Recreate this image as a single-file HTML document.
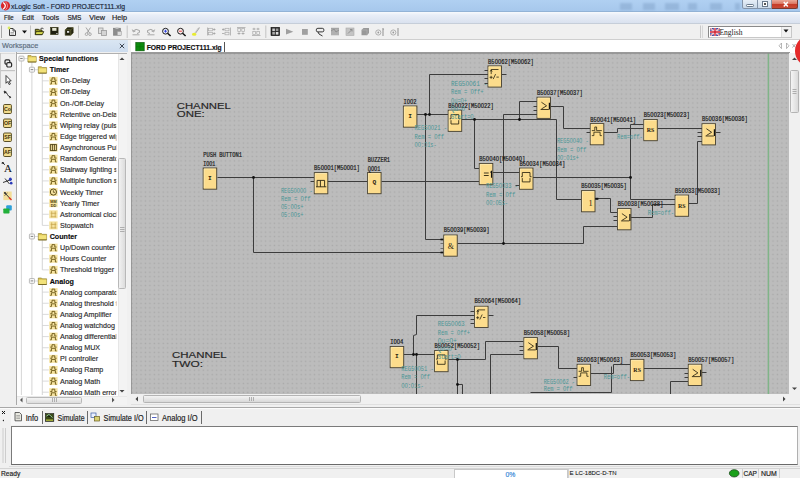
<!DOCTYPE html><html><head><meta charset="utf-8"><style>
*{margin:0;padding:0;box-sizing:border-box}
html,body{width:800px;height:478px;overflow:hidden;background:#f0f0f0;font-family:"Liberation Sans",sans-serif;font-size:8px;color:#000}
.a{position:absolute}
.sx{transform-origin:0 0;white-space:nowrap}
</style></head><body><div class="a" style="left:0px;top:0px;width:800px;height:12px;background:linear-gradient(#b0d0f2,#a6c7ec);"></div><div class="a" style="left:0px;top:11px;width:800px;height:1px;background:#93b3d6;"></div><svg class="a" style="left:0;top:0" width="12" height="12" viewBox="0 0 12 12"><circle cx="5.5" cy="5.8" r="4.6" fill="#d8262a"/><path d="M3.2 2.6 Q7.5 5.8 3.2 9.2" stroke="#fff" stroke-width="1.3" fill="none"/><path d="M5.5 1.8 Q9.6 5.8 5.5 9.9" stroke="#ffd0d0" stroke-width="0.6" fill="none"/></svg><div class="a" style="left:620px;top:3px;width:12px;height:7px;background:#7e9fc6;opacity:0.45;filter:blur(1.2px);"></div><div class="a" style="left:643px;top:3px;width:12px;height:7px;background:#7e9fc6;opacity:0.45;filter:blur(1.2px);"></div><div class="a" style="left:665px;top:3px;width:14px;height:7px;background:#7e9fc6;opacity:0.45;filter:blur(1.2px);"></div><div class="a" style="left:688px;top:3px;width:9px;height:7px;background:#7e9fc6;opacity:0.45;filter:blur(1.2px);"></div><div class="a" style="left:710px;top:3px;width:12px;height:7px;background:#7e9fc6;opacity:0.45;filter:blur(1.2px);"></div><div class="a" style="left:735px;top:3px;width:5px;height:7px;background:#7e9fc6;opacity:0.45;filter:blur(1.2px);"></div><div class="a" style="left:741.6px;top:0px;width:16px;height:9.3px;background:linear-gradient(#e6eef7,#c9d8e8);border:1px solid #8393a8;border-top:none;border-radius:0 0 0 2.5px;"></div><div class="a" style="left:746px;top:4.4px;width:8px;height:2.4px;background:#fff;border:0.8px solid #6a7a8c;border-radius:1.2px;"></div><div class="a" style="left:757.6px;top:0px;width:14.5px;height:9.3px;background:linear-gradient(#e6eef7,#c9d8e8);border-bottom:1px solid #8393a8;border-right:1px solid #8393a8;"></div><div class="a" style="left:762px;top:1.4px;width:6px;height:5.6px;border:1.2px solid #6a7a8c;background:#fff;"></div><div class="a" style="left:763.8px;top:3.2px;width:2.4px;height:2px;background:#555;"></div><div class="a" style="left:772px;top:0px;width:26.4px;height:9.3px;background:linear-gradient(#eaa898 0%,#dc7a66 45%,#c63c28 55%,#c84a36);border:1px solid #7a3a30;border-top:none;border-left:none;border-radius:0 0 2.5px 0;"></div><svg class="a" style="left:781px;top:0px" width="10" height="9"><path d="M2.8 2 L6.8 6.6 M6.8 2 L2.8 6.6" stroke="#fff" stroke-width="1.5"/></svg><div class="a" style="left:0px;top:12px;width:800px;height:12px;background:linear-gradient(#f8fafd 0,#e9eef7 25%,#d8e0ee);"></div><div class="a" style="left:0px;top:23px;width:800px;height:1px;background:#c6ced9;"></div><div class="a" style="left:0px;top:24px;width:800px;height:16px;background:#f0f0f0;"></div><div class="a" style="left:0px;top:39px;width:800px;height:1px;background:#cfcfcf;"></div><svg class="a" style="left:0;top:0" width="800" height="40"><line x1="1.5" y1="25.5" x2="1.5" y2="38" stroke="#a8a8a8" stroke-width="1"/><path d="M9.5 28.5 H13 L15.5 31 V35.5 H9.5 Z" fill="#f4f4f4" stroke="#3a3a3a" stroke-width="1"/><path d="M13 28.5 V31 H15.5" fill="none" stroke="#3a3a3a" stroke-width="0.8"/><path d="M10.5 32.5 H14 M10.5 34 H14" stroke="#777" stroke-width="0.6"/><circle cx="9" cy="28" r="1.4" fill="#d8e860"/><path d="M22 30.6 H27 L24.5 33.4 Z" fill="#111"/><line x1="30.5" y1="25.5" x2="30.5" y2="38" stroke="#c4c4c4" stroke-width="1"/><path d="M35.3 29.3 H38.5 L39.2 30 H42 V34.6 H35.3 Z" fill="#9c9c24" stroke="#26260a" stroke-width="0.9"/><path d="M36 31.6 H43.8 L42.3 34.6 H35.3 Z" fill="#d6d850" stroke="#26260a" stroke-width="0.8"/><path d="M40.5 28.8 Q42 27.3 43.5 28.7" stroke="#222" stroke-width="0.8" fill="none"/><rect x="50.6" y="27.3" width="7.5" height="7.3" fill="#202010" stroke="#3c3c1a" stroke-width="0.6"/><rect x="52.2" y="28" width="4.3" height="2.8" fill="#e6e6d0"/><rect x="56.3" y="33" width="1.2" height="1.1" fill="#ddd"/><path d="M65.2 29.8 L67.5 27.6 H73.2 V33 L70.8 35.3 H65.2 Z" fill="#22220e" stroke="#3a3a1a" stroke-width="0.6"/><path d="M65.2 29.8 H70.8 V35.3 M70.8 29.8 L73.2 27.6" stroke="#7a7a40" stroke-width="0.6" fill="none"/><rect x="67" y="31" width="2.2" height="1.8" fill="#ddd"/><line x1="78.5" y1="25.5" x2="78.5" y2="38" stroke="#c4c4c4" stroke-width="1"/><path d="M86 27.5 L89.5 33 M90.5 27.5 L87 33" stroke="#9a9a9a" stroke-width="0.9" fill="none"/><circle cx="86.5" cy="34.2" r="1.3" fill="none" stroke="#9a9a9a" stroke-width="0.8"/><circle cx="90" cy="34.2" r="1.3" fill="none" stroke="#9a9a9a" stroke-width="0.8"/><rect x="98.5" y="28" width="4.5" height="5.5" fill="#e0e0e0" stroke="#9a9a9a" stroke-width="0.8"/><rect x="101.5" y="30.5" width="5" height="5" fill="#d4d4d4" stroke="#9a9a9a" stroke-width="0.8"/><rect x="113.5" y="28.2" width="7" height="7" fill="#8c8c8c" stroke="#777" stroke-width="0.6"/><rect x="115.5" y="27.5" width="3" height="1.5" fill="#bbb"/><rect x="117.3" y="31.5" width="4.2" height="4" fill="#dcdcdc" stroke="#999" stroke-width="0.5"/><line x1="127.2" y1="25.5" x2="127.2" y2="38" stroke="#c4c4c4" stroke-width="1"/><path d="M133 31 Q136 28 139.5 30.5 Q140.5 33 137 33.5" stroke="#9a9a9a" stroke-width="0.9" fill="none"/><path d="M132.3 29.5 L133.3 32 L135.5 31" stroke="#9a9a9a" stroke-width="0.8" fill="none"/><rect x="132.5" y="34.3" width="7" height="1" fill="#aaa"/><path d="M154 31 Q151 28 147.5 30.5 Q146.5 33 150 33.5" stroke="#9a9a9a" stroke-width="0.9" fill="none"/><path d="M154.7 29.5 L153.7 32 L151.5 31" stroke="#9a9a9a" stroke-width="0.8" fill="none"/><rect x="147.5" y="34.3" width="7" height="1" fill="#aaa"/><circle cx="165.5" cy="31.2" r="2.9" fill="#eef2ff" stroke="#1a1a1a" stroke-width="1"/><path d="M167.6 33.3 L170.6 36" stroke="#111" stroke-width="1.5"/><path d="M164.1 31.2 H166.9 M165.5 29.8 V32.6" stroke="#2a3ad8" stroke-width="0.9"/><circle cx="180.5" cy="31.2" r="2.9" fill="#fff0f0" stroke="#1a1a1a" stroke-width="1"/><path d="M182.6 33.3 L185.6 36" stroke="#111" stroke-width="1.5"/><path d="M179.1 31.2 H181.9" stroke="#d83a3a" stroke-width="1"/><path d="M199.5 27.5 L195.5 33" stroke="#a8a8a8" stroke-width="1.2"/><path d="M198 28 L194.5 33.5" stroke="#cfcfcf" stroke-width="0.8"/><ellipse cx="194.2" cy="34.2" rx="2.3" ry="1.5" fill="#e8ec30"/><path d="M207.5 27.5 V35.5" stroke="#aaa" stroke-width="0.8"/><rect x="208.5" y="28.3" width="4" height="2.5" fill="none" stroke="#aaa" stroke-width="0.7"/><rect x="208.5" y="32.3" width="4" height="2.5" fill="none" stroke="#aaa" stroke-width="0.7"/><path d="M213 29.5 H215.5 M214.2 28.3 V30.7 M213 33.5 H215.5 M214.2 32.3 V34.7" stroke="#999" stroke-width="0.7"/><path d="M230.5 27.5 V35.5" stroke="#aaa" stroke-width="0.8"/><rect x="225" y="28.3" width="4" height="2.5" fill="none" stroke="#aaa" stroke-width="0.7"/><rect x="225" y="32.3" width="4" height="2.5" fill="none" stroke="#aaa" stroke-width="0.7"/><path d="M222 29.5 H224.5 M223.2 28.3 V30.7 M222 33.5 H224.5" stroke="#999" stroke-width="0.7"/><path d="M237 27.5 H245.5" stroke="#aaa" stroke-width="0.8"/><rect x="237.8" y="28.5" width="2.8" height="3" fill="none" stroke="#aaa" stroke-width="0.7"/><rect x="241.8" y="28.5" width="2.8" height="3" fill="none" stroke="#aaa" stroke-width="0.7"/><path d="M237.5 33.5 H240.5 M239 32.3 V34.7 M241.5 33.5 H244.5 M243 32.3 V34.7" stroke="#999" stroke-width="0.7"/><path d="M252 35.5 H260.5" stroke="#aaa" stroke-width="0.8"/><rect x="252.8" y="31.5" width="2.8" height="3" fill="none" stroke="#aaa" stroke-width="0.7"/><rect x="256.8" y="31.5" width="2.8" height="3" fill="none" stroke="#aaa" stroke-width="0.7"/><path d="M252.5 29 H255.5 M254 27.8 V30.2 M256.5 29 H259.5 M258 27.8 V30.2" stroke="#999" stroke-width="0.7"/><line x1="265.8" y1="25.5" x2="265.8" y2="38" stroke="#c4c4c4" stroke-width="1"/><rect x="271" y="27.3" width="8.6" height="8.4" fill="#2a2a2a" stroke="#111" stroke-width="0.6"/><rect x="272.3" y="28.5" width="2.6" height="2.6" fill="#ccc"/><rect x="275.8" y="28.5" width="2.6" height="2.6" fill="#999"/><rect x="272.3" y="32" width="2.6" height="2.6" fill="#aaa"/><rect x="275.8" y="32" width="2.6" height="2.6" fill="#ddd"/><path d="M286 28.8 L293.3 31.7 L286 34.6 Z" fill="#a0a0a0"/><rect x="302" y="29" width="5.8" height="5.8" fill="#a0a0a0"/><rect x="316.3" y="28.3" width="7.6" height="3.6" rx="1.6" fill="#eee" stroke="#222" stroke-width="0.9"/><path d="M318 32 L319 34 L322.5 36" stroke="#222" stroke-width="0.9" fill="none"/><rect x="331" y="28.5" width="8" height="6.8" fill="#b0b0b0"/><path d="M331 31 L334 29 L336 32 L339 30" stroke="#888" stroke-width="0.8" fill="none"/><rect x="331" y="27.8" width="8" height="1" fill="#999"/><rect x="346" y="28" width="8" height="7.5" fill="#c4c4c4" stroke="#aaa" stroke-width="0.6"/><path d="M348 33.5 L352 29.5 M350 29.5 H352 V31.5" stroke="#8a8a8a" stroke-width="0.9" fill="none"/><path d="M361.5 30 L363.5 28 H369 V33 L367 35.3 H361.5 Z" fill="#999"/><path d="M361.5 30 H367 V35.3" stroke="#bbb" stroke-width="0.5" fill="none"/><circle cx="378.3" cy="32.5" r="2.6" fill="none" stroke="#a8a8a8" stroke-width="0.9"/><circle cx="378.3" cy="32.5" r="0.9" fill="#999"/><path d="M383.0 28 V36" stroke="#a0a0a0" stroke-width="1.2"/><circle cx="393.3" cy="32.5" r="2.6" fill="none" stroke="#a8a8a8" stroke-width="0.9"/><circle cx="393.3" cy="32.5" r="0.9" fill="#999"/><path d="M398.0 28 V36" stroke="#a0a0a0" stroke-width="1.2"/><path d="M383 28.5 L382.8 29.8 L384.2 29.8 Z" fill="#999"/><line x1="700.5" y1="25.5" x2="700.5" y2="38" stroke="#c8c8c8" stroke-width="1"/><line x1="702.5" y1="25.5" x2="702.5" y2="38" stroke="#d8d8d8" stroke-width="1"/></svg><div class="a" style="left:708px;top:25.5px;width:84px;height:12px;background:#fff;border:1px solid #8a8a8a;border-right-color:#c8c8c8;border-bottom-color:#c8c8c8;"></div><div class="a" style="left:781px;top:26.5px;width:10px;height:10px;background:#f2f2f2;border-left:1px solid #ddd;"></div><svg class="a" style="left:783px;top:29px" width="6" height="4"><path d="M0.5 0.5 H5.5 L3 3.5 Z" fill="#111"/></svg><svg class="a" style="left:710px;top:27.5px" width="10" height="8" viewBox="0 0 10 8"><rect width="10" height="8" fill="#2c3e9c"/><path d="M0 0 L10 8 M10 0 L0 8" stroke="#fff" stroke-width="1.6"/><path d="M0 0 L10 8 M10 0 L0 8" stroke="#d02030" stroke-width="0.6"/><path d="M5 0 V8 M0 4 H10" stroke="#fff" stroke-width="2.4"/><path d="M5 0 V8 M0 4 H10" stroke="#d02030" stroke-width="1.4"/></svg><div class="a" style="left:0px;top:40px;width:128px;height:12px;background:linear-gradient(#dae6f3,#cddcee);"></div><svg class="a" style="left:118px;top:42px" width="8" height="8"><path d="M1.8 1.8 L6.2 6.2 M6.2 1.8 L1.8 6.2" stroke="#2a3340" stroke-width="0.9"/></svg><div class="a" style="left:0px;top:52px;width:16px;height:355px;background:#f0f0f0;"></div><div class="a" style="left:15.5px;top:52px;width:1px;height:353px;background:#a9a9a9;"></div><div class="a" style="left:1px;top:52.5px;width:14px;height:1px;background:#dcdcdc;"></div><div class="a" style="left:16.5px;top:52.5px;width:110.5px;height:352.5px;background:#fff;border:1px solid #b0b0b0;border-left:none;"></div><div class="a" style="left:117.5px;top:53.5px;width:9px;height:342px;background:#f3f3f3;border-left:1px solid #e6e6e6;"></div><div class="a" style="left:118.3px;top:157.8px;width:7.4px;height:131.5px;background:linear-gradient(90deg,#f2f2f2,#dcdcdc);border:1px solid #b8b8b8;border-radius:1.5px;"></div><svg class="a" style="left:117px;top:53px" width="10" height="343"><path d="M2.5 7 L5 4.5 L7.5 7 Z" fill="#444"/><path d="M2.5 337 L5 339.5 L7.5 337 Z" fill="#444"/><path d="M3 174.5 H7.5 M3 176.5 H7.5 M3 178.5 H7.5" stroke="#888" stroke-width="0.6"/></svg><div class="a" style="left:17px;top:395.5px;width:110px;height:9px;background:#f3f3f3;border-top:1px solid #e8e8e8;"></div><div class="a" style="left:26px;top:396.5px;width:56px;height:7px;background:linear-gradient(#f4f4f4,#dcdcdc);border:1px solid #b8b8b8;border-radius:1.5px;"></div><svg class="a" style="left:17px;top:395px" width="110" height="10"><path d="M5.5 2.5 L3 5 L5.5 7.5 Z" fill="#555"/><path d="M95 2.5 L97.5 5 L95 7.5 Z" fill="#555"/><path d="M35.5 3 V7 M37.5 3 V7 M39.5 3 V7" stroke="#888" stroke-width="0.6"/></svg><svg class="a" style="left:0;top:0" width="130" height="400"><path d="M21.4 61.2 V395" stroke="#d0d0d0" stroke-width="0.9"/><path d="M31.9 62.2 V395" stroke="#d0d0d0" stroke-width="0.9"/><path d="M24 58.6 H27.9" stroke="#d0d0d0" stroke-width="0.8"/><path d="M34.6 69.72 H38.3" stroke="#d0d0d0" stroke-width="0.8"/><path d="M34.6 236.51999999999998 H38.3" stroke="#d0d0d0" stroke-width="0.8"/><path d="M34.6 281.0 H38.3" stroke="#d0d0d0" stroke-width="0.8"/><path d="M42.3 73.52 V225.39999999999998" stroke="#d0d0d0" stroke-width="0.9"/><path d="M42.3 80.84 H48.8" stroke="#d0d0d0" stroke-width="0.8"/><path d="M42.3 91.96000000000001 H48.8" stroke="#d0d0d0" stroke-width="0.8"/><path d="M42.3 103.08 H48.8" stroke="#d0d0d0" stroke-width="0.8"/><path d="M42.3 114.19999999999999 H48.8" stroke="#d0d0d0" stroke-width="0.8"/><path d="M42.3 125.32 H48.8" stroke="#d0d0d0" stroke-width="0.8"/><path d="M42.3 136.44 H48.8" stroke="#d0d0d0" stroke-width="0.8"/><path d="M42.3 147.56 H48.8" stroke="#d0d0d0" stroke-width="0.8"/><path d="M42.3 158.68 H48.8" stroke="#d0d0d0" stroke-width="0.8"/><path d="M42.3 169.79999999999998 H48.8" stroke="#d0d0d0" stroke-width="0.8"/><path d="M42.3 180.92 H48.8" stroke="#d0d0d0" stroke-width="0.8"/><path d="M42.3 192.04 H48.8" stroke="#d0d0d0" stroke-width="0.8"/><path d="M42.3 203.16 H48.8" stroke="#d0d0d0" stroke-width="0.8"/><path d="M42.3 214.27999999999997 H48.8" stroke="#d0d0d0" stroke-width="0.8"/><path d="M42.3 225.39999999999998 H48.8" stroke="#d0d0d0" stroke-width="0.8"/><path d="M42.3 240.32 V269.88" stroke="#d0d0d0" stroke-width="0.9"/><path d="M42.3 247.64 H48.8" stroke="#d0d0d0" stroke-width="0.8"/><path d="M42.3 258.76 H48.8" stroke="#d0d0d0" stroke-width="0.8"/><path d="M42.3 269.88 H48.8" stroke="#d0d0d0" stroke-width="0.8"/><path d="M42.3 284.8 V395" stroke="#d0d0d0" stroke-width="0.9"/><path d="M42.3 292.12 H48.8" stroke="#d0d0d0" stroke-width="0.8"/><path d="M42.3 303.24 H48.8" stroke="#d0d0d0" stroke-width="0.8"/><path d="M42.3 314.36 H48.8" stroke="#d0d0d0" stroke-width="0.8"/><path d="M42.3 325.48 H48.8" stroke="#d0d0d0" stroke-width="0.8"/><path d="M42.3 336.6 H48.8" stroke="#d0d0d0" stroke-width="0.8"/><path d="M42.3 347.72 H48.8" stroke="#d0d0d0" stroke-width="0.8"/><path d="M42.3 358.84 H48.8" stroke="#d0d0d0" stroke-width="0.8"/><path d="M42.3 369.96 H48.8" stroke="#d0d0d0" stroke-width="0.8"/><path d="M42.3 381.08 H48.8" stroke="#d0d0d0" stroke-width="0.8"/><path d="M42.3 392.2 H48.8" stroke="#d0d0d0" stroke-width="0.8"/><rect x="18.9" y="56.1" width="5.1" height="4.9" rx="0.8" fill="#f6f6f6" stroke="#a0a0a0" stroke-width="0.7"/><path d="M20.2 58.5 H22.7" stroke="#555" stroke-width="0.7"/><path d="M27.9 55.6 H31.099999999999998 L31.9 56.4 H36.2 V62.0 H27.9 Z" fill="#d8c050" stroke="#8a7a28" stroke-width="0.6"/><rect x="28.4" y="57.300000000000004" width="7.5" height="4.3" fill="#f2e27a"/><rect x="27.9" y="61.6" width="8.3" height="0.8" fill="#6a5a18"/><rect x="29.4" y="67.22" width="5.1" height="4.9" rx="0.8" fill="#f6f6f6" stroke="#a0a0a0" stroke-width="0.7"/><path d="M30.7 69.62 H33.199999999999996" stroke="#555" stroke-width="0.7"/><path d="M38.3 66.72 H41.5 L42.3 67.52 H46.599999999999994 V73.12 H38.3 Z" fill="#d8c050" stroke="#8a7a28" stroke-width="0.6"/><rect x="38.8" y="68.42" width="7.5" height="4.3" fill="#f2e27a"/><rect x="38.3" y="72.72" width="8.3" height="0.8" fill="#6a5a18"/><rect x="49.2" y="76.84" width="8.4" height="8" fill="#f6e3a0"/><path d="M50.2 80.24000000000001 H52.0 V77.84 H54.800000000000004 V80.24000000000001 H56.6" stroke="#6a5614" stroke-width="0.9" fill="none"/><path d="M50.2 84.04 H51.400000000000006 V81.44 H55.400000000000006 V84.04 H56.6" stroke="#6a5614" stroke-width="0.9" fill="none"/><rect x="49.2" y="87.96000000000001" width="8.4" height="8" fill="#f6e3a0"/><path d="M50.2 91.36000000000001 H52.0 V88.96000000000001 H54.800000000000004 V91.36000000000001 H56.6" stroke="#6a5614" stroke-width="0.9" fill="none"/><path d="M50.2 95.16000000000001 H51.400000000000006 V92.56 H55.400000000000006 V95.16000000000001 H56.6" stroke="#6a5614" stroke-width="0.9" fill="none"/><rect x="49.2" y="99.08" width="8.4" height="8" fill="#f6e3a0"/><path d="M50.2 102.48 H52.0 V100.08 H54.800000000000004 V102.48 H56.6" stroke="#6a5614" stroke-width="0.9" fill="none"/><path d="M50.2 106.28 H51.400000000000006 V103.67999999999999 H55.400000000000006 V106.28 H56.6" stroke="#6a5614" stroke-width="0.9" fill="none"/><rect x="49.2" y="110.19999999999999" width="8.4" height="8" fill="#f6e3a0"/><path d="M50.2 113.6 H52.0 V111.19999999999999 H54.800000000000004 V113.6 H56.6" stroke="#6a5614" stroke-width="0.9" fill="none"/><path d="M50.2 117.39999999999999 H51.400000000000006 V114.79999999999998 H55.400000000000006 V117.39999999999999 H56.6" stroke="#6a5614" stroke-width="0.9" fill="none"/><rect x="49.2" y="121.32" width="8.4" height="8" fill="#f6e3a0"/><path d="M50.2 124.72 H52.0 V122.32 H54.800000000000004 V124.72 H56.6" stroke="#6a5614" stroke-width="0.9" fill="none"/><path d="M50.2 128.51999999999998 H51.400000000000006 V125.91999999999999 H55.400000000000006 V128.51999999999998 H56.6" stroke="#6a5614" stroke-width="0.9" fill="none"/><rect x="49.2" y="132.44" width="8.4" height="8" fill="#f6e3a0"/><path d="M50.2 135.84 H52.0 V133.44 H54.800000000000004 V135.84 H56.6" stroke="#6a5614" stroke-width="0.9" fill="none"/><path d="M50.2 139.64 H51.400000000000006 V137.04 H55.400000000000006 V139.64 H56.6" stroke="#6a5614" stroke-width="0.9" fill="none"/><rect x="49.2" y="143.56" width="8.4" height="8" fill="#f6e3a0"/><path d="M50.400000000000006 144.56 V150.56 M52.400000000000006 144.56 V150.56 M54.400000000000006 144.56 V150.56 M56.400000000000006 144.56 V150.56 M50.2 144.56 H56.6 M50.2 150.56 H56.6" stroke="#3a2e08" stroke-width="0.8" fill="none"/><rect x="49.2" y="154.68" width="8.4" height="8" fill="#f6e3a0"/><path d="M50.2 158.08 H52.0 V155.68 H54.800000000000004 V158.08 H56.6" stroke="#6a5614" stroke-width="0.9" fill="none"/><path d="M50.2 161.88 H51.400000000000006 V159.28 H55.400000000000006 V161.88 H56.6" stroke="#6a5614" stroke-width="0.9" fill="none"/><rect x="49.2" y="165.79999999999998" width="8.4" height="8" fill="#f6e3a0"/><path d="M50.2 169.2 H52.0 V166.79999999999998 H54.800000000000004 V169.2 H56.6" stroke="#6a5614" stroke-width="0.9" fill="none"/><path d="M50.2 172.99999999999997 H51.400000000000006 V170.39999999999998 H55.400000000000006 V172.99999999999997 H56.6" stroke="#6a5614" stroke-width="0.9" fill="none"/><rect x="49.2" y="176.92" width="8.4" height="8" fill="#f6e3a0"/><path d="M50.2 180.32 H52.0 V177.92 H54.800000000000004 V180.32 H56.6" stroke="#6a5614" stroke-width="0.9" fill="none"/><path d="M50.2 184.11999999999998 H51.400000000000006 V181.51999999999998 H55.400000000000006 V184.11999999999998 H56.6" stroke="#6a5614" stroke-width="0.9" fill="none"/><rect x="49.2" y="188.04" width="8.4" height="8" fill="#f6e3a0"/><circle cx="53.400000000000006" cy="192.04" r="3.1" fill="none" stroke="#4a3a08" stroke-width="0.9"/><path d="M53.400000000000006 190.23999999999998 V192.34 H55.0" stroke="#4a3a08" stroke-width="0.7" fill="none"/><rect x="49.2" y="199.16" width="8.4" height="8" fill="#f6e3a0"/><text x="53.400000000000006" y="202.85999999999999" font-family="Liberation Sans" font-size="3.8" font-weight="bold" text-anchor="middle" fill="#4a3a08">MM</text><text x="53.400000000000006" y="206.76" font-family="Liberation Sans" font-size="3.8" font-weight="bold" text-anchor="middle" fill="#4a3a08">DD</text><rect x="49.2" y="210.27999999999997" width="8.4" height="8" fill="#f6e3a0"/><path d="M50.7 213.27999999999997 H56.2 M50.7 216.77999999999997 H56.2 M51.7 211.27999999999997 V217.27999999999997 M55.2 211.27999999999997 V217.27999999999997" stroke="#c8a850" stroke-width="0.8" fill="none"/><rect x="49.2" y="221.39999999999998" width="8.4" height="8" fill="#f6e3a0"/><path d="M50.7 224.39999999999998 H56.2 M50.7 227.89999999999998 H56.2 M51.7 222.39999999999998 V228.39999999999998 M55.2 222.39999999999998 V228.39999999999998" stroke="#c8a850" stroke-width="0.8" fill="none"/><rect x="29.4" y="234.01999999999998" width="5.1" height="4.9" rx="0.8" fill="#f6f6f6" stroke="#a0a0a0" stroke-width="0.7"/><path d="M30.7 236.42 H33.199999999999996" stroke="#555" stroke-width="0.7"/><path d="M38.3 233.51999999999998 H41.5 L42.3 234.32 H46.599999999999994 V239.92 H38.3 Z" fill="#d8c050" stroke="#8a7a28" stroke-width="0.6"/><rect x="38.8" y="235.21999999999997" width="7.5" height="4.3" fill="#f2e27a"/><rect x="38.3" y="239.51999999999998" width="8.3" height="0.8" fill="#6a5a18"/><rect x="49.2" y="243.64" width="8.4" height="8" fill="#f6e3a0"/><path d="M50.2 247.04 H52.0 V244.64 H54.800000000000004 V247.04 H56.6" stroke="#6a5614" stroke-width="0.9" fill="none"/><path d="M50.2 250.83999999999997 H51.400000000000006 V248.23999999999998 H55.400000000000006 V250.83999999999997 H56.6" stroke="#6a5614" stroke-width="0.9" fill="none"/><rect x="49.2" y="254.76" width="8.4" height="8" fill="#f6e3a0"/><path d="M50.2 258.15999999999997 H52.0 V255.76 H54.800000000000004 V258.15999999999997 H56.6" stroke="#6a5614" stroke-width="0.9" fill="none"/><path d="M50.2 261.96 H51.400000000000006 V259.36 H55.400000000000006 V261.96 H56.6" stroke="#6a5614" stroke-width="0.9" fill="none"/><rect x="49.2" y="265.88" width="8.4" height="8" fill="#f6e3a0"/><path d="M50.2 269.28 H52.0 V266.88 H54.800000000000004 V269.28 H56.6" stroke="#6a5614" stroke-width="0.9" fill="none"/><path d="M50.2 273.08 H51.400000000000006 V270.48 H55.400000000000006 V273.08 H56.6" stroke="#6a5614" stroke-width="0.9" fill="none"/><rect x="29.4" y="278.5" width="5.1" height="4.9" rx="0.8" fill="#f6f6f6" stroke="#a0a0a0" stroke-width="0.7"/><path d="M30.7 280.9 H33.199999999999996" stroke="#555" stroke-width="0.7"/><path d="M38.3 278.0 H41.5 L42.3 278.8 H46.599999999999994 V284.4 H38.3 Z" fill="#d8c050" stroke="#8a7a28" stroke-width="0.6"/><rect x="38.8" y="279.7" width="7.5" height="4.3" fill="#f2e27a"/><rect x="38.3" y="284.0" width="8.3" height="0.8" fill="#6a5a18"/><rect x="49.2" y="288.12" width="8.4" height="8" fill="#f6e3a0"/><path d="M50.2 291.52 H52.0 V289.12 H54.800000000000004 V291.52 H56.6" stroke="#6a5614" stroke-width="0.9" fill="none"/><path d="M50.2 295.32 H51.400000000000006 V292.72 H55.400000000000006 V295.32 H56.6" stroke="#6a5614" stroke-width="0.9" fill="none"/><rect x="49.2" y="299.24" width="8.4" height="8" fill="#f6e3a0"/><path d="M50.2 302.64 H52.0 V300.24 H54.800000000000004 V302.64 H56.6" stroke="#6a5614" stroke-width="0.9" fill="none"/><path d="M50.2 306.44 H51.400000000000006 V303.84000000000003 H55.400000000000006 V306.44 H56.6" stroke="#6a5614" stroke-width="0.9" fill="none"/><rect x="49.2" y="310.36" width="8.4" height="8" fill="#f6e3a0"/><path d="M50.2 313.76 H52.0 V311.36 H54.800000000000004 V313.76 H56.6" stroke="#6a5614" stroke-width="0.9" fill="none"/><path d="M50.2 317.56 H51.400000000000006 V314.96000000000004 H55.400000000000006 V317.56 H56.6" stroke="#6a5614" stroke-width="0.9" fill="none"/><rect x="49.2" y="321.48" width="8.4" height="8" fill="#f6e3a0"/><path d="M50.2 324.88 H52.0 V322.48 H54.800000000000004 V324.88 H56.6" stroke="#6a5614" stroke-width="0.9" fill="none"/><path d="M50.2 328.68 H51.400000000000006 V326.08000000000004 H55.400000000000006 V328.68 H56.6" stroke="#6a5614" stroke-width="0.9" fill="none"/><rect x="49.2" y="332.6" width="8.4" height="8" fill="#f6e3a0"/><path d="M50.2 336.0 H52.0 V333.6 H54.800000000000004 V336.0 H56.6" stroke="#6a5614" stroke-width="0.9" fill="none"/><path d="M50.2 339.8 H51.400000000000006 V337.20000000000005 H55.400000000000006 V339.8 H56.6" stroke="#6a5614" stroke-width="0.9" fill="none"/><rect x="49.2" y="343.72" width="8.4" height="8" fill="#f6e3a0"/><path d="M50.2 347.12 H52.0 V344.72 H54.800000000000004 V347.12 H56.6" stroke="#6a5614" stroke-width="0.9" fill="none"/><path d="M50.2 350.92 H51.400000000000006 V348.32000000000005 H55.400000000000006 V350.92 H56.6" stroke="#6a5614" stroke-width="0.9" fill="none"/><rect x="49.2" y="354.84" width="8.4" height="8" fill="#f6e3a0"/><path d="M50.2 358.23999999999995 H52.0 V355.84 H54.800000000000004 V358.23999999999995 H56.6" stroke="#6a5614" stroke-width="0.9" fill="none"/><path d="M50.2 362.03999999999996 H51.400000000000006 V359.44 H55.400000000000006 V362.03999999999996 H56.6" stroke="#6a5614" stroke-width="0.9" fill="none"/><rect x="49.2" y="365.96" width="8.4" height="8" fill="#f6e3a0"/><path d="M50.2 369.35999999999996 H52.0 V366.96 H54.800000000000004 V369.35999999999996 H56.6" stroke="#6a5614" stroke-width="0.9" fill="none"/><path d="M50.2 373.15999999999997 H51.400000000000006 V370.56 H55.400000000000006 V373.15999999999997 H56.6" stroke="#6a5614" stroke-width="0.9" fill="none"/><rect x="49.2" y="377.08" width="8.4" height="8" fill="#f6e3a0"/><path d="M50.2 380.47999999999996 H52.0 V378.08 H54.800000000000004 V380.47999999999996 H56.6" stroke="#6a5614" stroke-width="0.9" fill="none"/><path d="M50.2 384.28 H51.400000000000006 V381.68 H55.400000000000006 V384.28 H56.6" stroke="#6a5614" stroke-width="0.9" fill="none"/><rect x="49.2" y="388.2" width="8.4" height="8" fill="#f6e3a0"/><path d="M50.2 391.59999999999997 H52.0 V389.2 H54.800000000000004 V391.59999999999997 H56.6" stroke="#6a5614" stroke-width="0.9" fill="none"/><path d="M50.2 395.4 H51.400000000000006 V392.8 H55.400000000000006 V395.4 H56.6" stroke="#6a5614" stroke-width="0.9" fill="none"/></svg><svg class="a" style="left:0;top:0" width="16" height="230"><rect x="0" y="53" width="1" height="35" fill="#c8c8c8"/><rect x="1" y="70" width="14" height="1.2" fill="#c4c4c4"/><rect x="5" y="59.8" width="4.8" height="4.4" rx="1.2" fill="none" stroke="#2a2a2a" stroke-width="1.2"/><rect x="6.8" y="62.6" width="4.8" height="4.4" rx="1.2" fill="#f0f0f0" stroke="#2a2a2a" stroke-width="1.2"/><path d="M6 75.5 V83.3 L7.6 81.6 L9.2 84.6 L10.4 84 L8.9 81.1 L11.2 80.9 Z" fill="#fff" stroke="#222" stroke-width="0.85"/><path d="M4.2 91 L6.3 92.2 L4.6 93.2 Z M4.5 92 Q7 92.5 7.5 94.5 Q8.2 96.5 10.6 97" stroke="#222" stroke-width="0.9" fill="none"/><path d="M11.3 97.3 L9.2 96 L9.6 98.4 Z" fill="#222"/><rect x="3.6" y="104.5" width="7.8" height="9.0" rx="1" fill="#f2dc8e" stroke="#4a3e14" stroke-width="0.9"/><text x="7.5" y="111.0" font-family="Liberation Sans" font-size="5.2" font-weight="bold" text-anchor="middle" fill="#3a2e08">Co</text><rect x="3.6" y="119" width="7.8" height="8.5" rx="1" fill="#f2dc8e" stroke="#4a3e14" stroke-width="0.9"/><text x="7.5" y="125.25" font-family="Liberation Sans" font-size="5.2" font-weight="bold" text-anchor="middle" fill="#3a2e08">OF</text><rect x="3.6" y="133" width="7.8" height="8.5" rx="1" fill="#f2dc8e" stroke="#4a3e14" stroke-width="0.9"/><text x="7.5" y="139.25" font-family="Liberation Sans" font-size="5.2" font-weight="bold" text-anchor="middle" fill="#3a2e08">SF</text><rect x="3.6" y="147.5" width="7.8" height="9.0" rx="1" fill="#f2dc8e" stroke="#4a3e14" stroke-width="0.9"/><text x="7.5" y="154.0" font-family="Liberation Sans" font-size="5.2" font-weight="bold" text-anchor="middle" fill="#3a2e08">AF</text><text x="8" y="171.8" font-family="Liberation Serif" font-size="11" text-anchor="middle" fill="#111">A</text><path d="M2.3 162.6 L4.8 164.6" stroke="#111" stroke-width="1"/><path d="M2.2 162.5 H3.8 M2.2 162.5 V164" stroke="#111" stroke-width="0.8"/><path d="M3 182.5 L11.5 179.5 M5 178.5 L9.5 184" stroke="#222" stroke-width="0.9"/><ellipse cx="10.3" cy="179.3" rx="1.5" ry="1.8" fill="#2a3ab8"/><ellipse cx="11.2" cy="183.2" rx="1.3" ry="1.4" fill="#2a3ab8"/><rect x="3.3" y="191.5" width="8.4" height="8.6" fill="#f4de98"/><path d="M4.5 192.5 L10.5 199" stroke="#333" stroke-width="1"/><path d="M4.5 195.5 L7.5 193" stroke="#333" stroke-width="0.8"/><path d="M9 197.5 L11.5 200" stroke="#e03a2a" stroke-width="1.4"/><circle cx="5" cy="193" r="1" fill="#333"/><rect x="6.2" y="205.3" width="5.6" height="5.2" rx="1" fill="#2ea0d8"/><rect x="3.3" y="208.5" width="6.2" height="5" rx="0.8" fill="#22b03a"/></svg><div class="a" style="left:128px;top:40px;width:2.5px;height:367px;background:#f0f0f0;"></div><div class="a" style="left:130.5px;top:40px;width:669.5px;height:13px;background:#fff;"></div><div class="a" style="left:130.5px;top:52.3px;width:659px;height:0.8px;background:#9a9a9a;"></div><svg class="a" style="left:135px;top:42px" width="10" height="10"><rect x="0.8" y="0.5" width="8.4" height="8.3" fill="#0c8a0c" stroke="#0a5a0a" stroke-width="0.7"/><path d="M5 1 V8.5 M1 4.7 H9" stroke="#067006" stroke-width="0.5"/></svg><div class="a" style="left:223.8px;top:41.5px;width:1px;height:10px;background:#555;"></div><svg class="a" style="left:776px;top:41px" width="24" height="10"><path d="M5.5 2 L3 4.8 L5.5 7.6 Z" stroke="#999" stroke-width="0.7" fill="none"/><path d="M10.5 2 L13 4.8 L10.5 7.6 Z" stroke="#999" stroke-width="0.7" fill="none"/><path d="M16.5 3 L19.5 6.5 M19.5 3 L16.5 6.5" stroke="#888" stroke-width="0.7"/></svg><svg class="a" style="left:131px;top:53px" width="658" height="341" viewBox="131 53 658 341"><defs><pattern id="dots" x="134.35" y="56.25" width="4.4505" height="4.4536" patternUnits="userSpaceOnUse"><rect x="1.5" y="1.5" width="1.4" height="1.4" fill="#a9a9a9"/></pattern></defs><rect x="131" y="53" width="658" height="341" fill="#bcbcbc"/><rect x="131" y="53" width="658" height="341" fill="url(#dots)"/><line x1="768.4" y1="53" x2="768.4" y2="394" stroke="#80b488" stroke-width="1.5"/><path d="M131.4 394 V53.4 H789" stroke="#8a8a8a" stroke-width="0.8" fill="none"/><path d="M217.5 177.5 L314.5 177.5" fill="none" stroke="#3c3c3c" stroke-width="1.0"/><path d="M253.5 177.5 L253.5 252.5 L443.5 252.5" fill="none" stroke="#3c3c3c" stroke-width="1.0"/><path d="M310.5 181.5 L314.5 181.5" fill="none" stroke="#3c3c3c" stroke-width="1.0"/><path d="M327.5 181.5 L367.5 181.5" fill="none" stroke="#3c3c3c" stroke-width="1.0"/><path d="M381.5 181.5 L479.5 181.5" fill="none" stroke="#3c3c3c" stroke-width="1.0"/><path d="M416.5 114.5 L448.5 114.5" fill="none" stroke="#3c3c3c" stroke-width="1.0"/><path d="M429.5 114.5 L429.5 74.5 L488.5 74.5" fill="none" stroke="#3c3c3c" stroke-width="1.0"/><path d="M425.5 114.5 L425.5 239.5 L443.5 239.5" fill="none" stroke="#3c3c3c" stroke-width="1.0"/><path d="M461.5 119.5 L556.5 119.5" fill="none" stroke="#3c3c3c" stroke-width="1.0"/><path d="M474.5 119.5 L474.5 168.5 L479.5 168.5" fill="none" stroke="#3c3c3c" stroke-width="1.0"/><path d="M519.5 119.5 L519.5 101.5 L537.5 101.5" fill="none" stroke="#3c3c3c" stroke-width="1.0"/><path d="M556.5 119.5 L556.5 199.5 L581.5 199.5" fill="none" stroke="#3c3c3c" stroke-width="1.0"/><path d="M503.5 114.5 L537.5 114.5" fill="none" stroke="#3c3c3c" stroke-width="1.0"/><path d="M503.5 114.5 L503.5 243.5" fill="none" stroke="#3c3c3c" stroke-width="1.0"/><path d="M550.5 106.5 L563.5 106.5 L563.5 128.5 L590.5 128.5" fill="none" stroke="#3c3c3c" stroke-width="1.0"/><path d="M603.5 132.5 L617.5 132.5 L617.5 128.5 L643.5 128.5" fill="none" stroke="#3c3c3c" stroke-width="1.0"/><path d="M630.5 124.5 L643.5 124.5" fill="none" stroke="#3c3c3c" stroke-width="1.0"/><path d="M630.5 124.5 L630.5 199.5 L675.5 199.5" fill="none" stroke="#3c3c3c" stroke-width="1.0"/><path d="M657.5 128.5 L702.5 128.5" fill="none" stroke="#3c3c3c" stroke-width="1.0"/><path d="M688.5 203.5 L697.5 203.5 L697.5 141.5 L702.5 141.5" fill="none" stroke="#3c3c3c" stroke-width="1.0"/><path d="M492.5 172.5 L519.5 172.5" fill="none" stroke="#3c3c3c" stroke-width="1.0"/><path d="M532.5 177.5 L630.5 177.5" fill="none" stroke="#3c3c3c" stroke-width="1.0"/><path d="M595.5 198.5 L610.5 198.5 L610.5 212.5 L617.5 212.5" fill="none" stroke="#3c3c3c" stroke-width="1.0"/><path d="M457.5 243.5 L583.5 243.5 L583.5 226.5 L617.5 226.5" fill="none" stroke="#3c3c3c" stroke-width="1.0"/><path d="M630.5 217.5 L652.5 217.5 L652.5 204.5 L675.5 204.5" fill="none" stroke="#3c3c3c" stroke-width="1.0"/><path d="M533.5 106.5 L537.5 106.5" fill="none" stroke="#3c3c3c" stroke-width="1.0"/><path d="M533.5 110.5 L537.5 110.5" fill="none" stroke="#3c3c3c" stroke-width="1.0"/><path d="M613.5 216.5 L617.5 216.5" fill="none" stroke="#3c3c3c" stroke-width="1.0"/><path d="M613.5 220.5 L617.5 220.5" fill="none" stroke="#3c3c3c" stroke-width="1.0"/><path d="M697.5 132.5 L702.5 132.5" fill="none" stroke="#3c3c3c" stroke-width="1.0"/><path d="M697.5 136.5 L702.5 136.5" fill="none" stroke="#3c3c3c" stroke-width="1.0"/><path d="M715.5 132.5 L720.5 132.5" fill="none" stroke="#3c3c3c" stroke-width="1.0"/><path d="M484.5 70.5 L488.5 70.5" fill="none" stroke="#3c3c3c" stroke-width="1.0"/><path d="M484.5 78.5 L488.5 78.5" fill="none" stroke="#3c3c3c" stroke-width="1.0"/><path d="M484.5 83.5 L488.5 83.5" fill="none" stroke="#3c3c3c" stroke-width="1.0"/><path d="M501.5 74.5 L506.5 74.5" fill="none" stroke="#3c3c3c" stroke-width="1.0"/><path d="M586.5 132.5 L590.5 132.5" fill="none" stroke="#3c3c3c" stroke-width="1.0"/><path d="M515.5 185.5 L519.5 185.5" fill="none" stroke="#3c3c3c" stroke-width="1.0"/><path d="M440.5 239.5 L443.5 239.5" fill="none" stroke="#111" stroke-width="1.7"/><path d="M440.5 252.5 L443.5 252.5" fill="none" stroke="#111" stroke-width="1.7"/><path d="M440.5 243.5 L443.5 243.5" fill="none" stroke="#666" stroke-width="0.9"/><path d="M440.5 248.5 L443.5 248.5" fill="none" stroke="#666" stroke-width="0.9"/><circle cx="253.5" cy="177.5" r="1.4" fill="#111"/><circle cx="425.5" cy="114.5" r="1.4" fill="#111"/><circle cx="429.5" cy="114.5" r="1.4" fill="#111"/><circle cx="474.5" cy="119.5" r="1.4" fill="#111"/><circle cx="519.5" cy="119.5" r="1.4" fill="#111"/><circle cx="630.5" cy="177.5" r="1.4" fill="#111"/><circle cx="503.5" cy="243.5" r="1.4" fill="#111"/><path d="M403.5 354.5 L434.5 354.5" fill="none" stroke="#3c3c3c" stroke-width="1.0"/><path d="M413.5 354.5 L413.5 335.5 L416.5 334.5 L416.5 315.5 L474.5 315.5" fill="none" stroke="#3c3c3c" stroke-width="1.0"/><path d="M416.5 354.5 L416.5 394.5" fill="none" stroke="#3c3c3c" stroke-width="1.0"/><path d="M448.5 359.5 L485.5 359.5 L485.5 341.5 L523.5 341.5" fill="none" stroke="#3c3c3c" stroke-width="1.0"/><path d="M457.5 359.5 L457.5 394.5" fill="none" stroke="#3c3c3c" stroke-width="1.0"/><path d="M457.5 384.5 L462.5 384.5 L462.5 394.5" fill="none" stroke="#3c3c3c" stroke-width="1.0"/><path d="M490.5 354.5 L523.5 354.5" fill="none" stroke="#3c3c3c" stroke-width="1.0"/><path d="M490.5 354.5 L490.5 394.5" fill="none" stroke="#3c3c3c" stroke-width="1.0"/><path d="M537.5 346.5 L558.5 346.5 L558.5 368.5 L577.5 368.5" fill="none" stroke="#3c3c3c" stroke-width="1.0"/><path d="M590.5 373.5 L613.5 373.5 L613.5 364.5 L630.5 364.5" fill="none" stroke="#3c3c3c" stroke-width="1.0"/><path d="M611.5 366.5 L611.5 392.5 L530.5 392.5" fill="none" stroke="#3c3c3c" stroke-width="1.0"/><path d="M643.5 368.5 L688.5 368.5" fill="none" stroke="#3c3c3c" stroke-width="1.0"/><path d="M670.5 381.5 L688.5 381.5" fill="none" stroke="#3c3c3c" stroke-width="1.0"/><path d="M670.5 381.5 L670.5 394.5" fill="none" stroke="#3c3c3c" stroke-width="1.0"/><path d="M701.5 372.5 L706.5 372.5" fill="none" stroke="#3c3c3c" stroke-width="1.0"/><path d="M470.5 311.5 L474.5 311.5" fill="none" stroke="#3c3c3c" stroke-width="1.0"/><path d="M470.5 319.5 L474.5 319.5" fill="none" stroke="#3c3c3c" stroke-width="1.0"/><path d="M470.5 323.5 L474.5 323.5" fill="none" stroke="#3c3c3c" stroke-width="1.0"/><path d="M488.5 315.5 L493.5 315.5" fill="none" stroke="#3c3c3c" stroke-width="1.0"/><path d="M519.5 346.5 L523.5 346.5" fill="none" stroke="#3c3c3c" stroke-width="1.0"/><path d="M519.5 350.5 L523.5 350.5" fill="none" stroke="#3c3c3c" stroke-width="1.0"/><path d="M573.5 377.5 L577.5 377.5" fill="none" stroke="#3c3c3c" stroke-width="1.0"/><path d="M684.5 373.5 L688.5 373.5" fill="none" stroke="#3c3c3c" stroke-width="1.0"/><path d="M684.5 377.5 L688.5 377.5" fill="none" stroke="#3c3c3c" stroke-width="1.0"/><circle cx="413.5" cy="354.5" r="1.4" fill="#111"/><circle cx="416.5" cy="354.5" r="1.4" fill="#111"/><circle cx="457.5" cy="359.5" r="1.4" fill="#111"/><circle cx="457.5" cy="384.5" r="1.4" fill="#111"/><rect x="203.2" y="168" width="13.5" height="21.2" fill="#fcdc8c" stroke="#4c4636" stroke-width="0.95"/><path d="M204.1 188.2 V168.9 H215.7" stroke="#fff0c0" stroke-width="0.6" fill="none"/><text x="209.95" y="179.9" font-family="Liberation Mono" font-size="6.2" font-weight="bold" text-anchor="middle" fill="#2a2410">I</text><rect x="314.3" y="172.6" width="13.5" height="21.2" fill="#fcdc8c" stroke="#4c4636" stroke-width="0.95"/><path d="M315.2 192.79999999999998 V173.5 H326.8" stroke="#fff0c0" stroke-width="0.6" fill="none"/><path d="M316.0 186.79999999999998 H326.3 M317.1 186.79999999999998 V180.4 H324.6 M320.40000000000003 180.4 V186.79999999999998 M324.6 180.4 V186.79999999999998" stroke="#2a2410" stroke-width="0.9" fill="none"/><rect x="367.6" y="172.5" width="13.5" height="21.2" fill="#fcdc8c" stroke="#4c4636" stroke-width="0.95"/><path d="M368.5 192.7 V173.4 H380.1" stroke="#fff0c0" stroke-width="0.6" fill="none"/><text x="374.35" y="184.4" font-family="Liberation Mono" font-size="6.2" font-weight="bold" text-anchor="middle" fill="#2a2410">Q</text><rect x="403.4" y="106" width="13.5" height="21.2" fill="#fcdc8c" stroke="#4c4636" stroke-width="0.95"/><path d="M404.29999999999995 126.2 V106.9 H415.9" stroke="#fff0c0" stroke-width="0.6" fill="none"/><text x="410.15" y="117.89999999999999" font-family="Liberation Mono" font-size="6.2" font-weight="bold" text-anchor="middle" fill="#2a2410">I</text><rect x="488" y="65.9" width="13.5" height="21.2" fill="#fcdc8c" stroke="#4c4636" stroke-width="0.95"/><path d="M488.9 86.10000000000001 V66.80000000000001 H500.5" stroke="#fff0c0" stroke-width="0.6" fill="none"/><path d="M491.2 69.5 H498.5 M491.2 69.5 V74.10000000000001 M490.2 71.5 L491.2 69.9 L492.2 71.5" stroke="#2a2410" stroke-width="0.8" fill="none"/><path d="M489.6 77.30000000000001 H492.6 M491.1 75.80000000000001 V78.80000000000001 M493.2 79.10000000000001 L495.6 74.10000000000001 M496.4 77.10000000000001 H498.8" stroke="#2a2410" stroke-width="0.8" fill="none"/><rect x="448.2" y="110.2" width="13.5" height="21.2" fill="#fcdc8c" stroke="#4c4636" stroke-width="0.95"/><path d="M449.09999999999997 130.4 V111.10000000000001 H460.7" stroke="#fff0c0" stroke-width="0.6" fill="none"/><path d="M449.7 118.8 H451.0 V114.60000000000001 H458.7 V118.8 H460.2" stroke="#2a2410" stroke-width="0.85" fill="none"/><path d="M451.0 120.2 V124.0 H458.7 V120.2" stroke="#2a2410" stroke-width="0.85" fill="none"/><rect x="537" y="97.2" width="13.5" height="21.2" fill="#fcdc8c" stroke="#4c4636" stroke-width="0.95"/><path d="M537.9 117.4 V98.10000000000001 H549.5" stroke="#fff0c0" stroke-width="0.6" fill="none"/><path d="M541.4 102.2 L546.6 105.8 L541.4 109.0 M540.6 109.5 H548.8" stroke="#2a2410" stroke-width="0.85" fill="none"/><path d="M549.4 102.7 V109.5" stroke="#111" stroke-width="1.2"/><rect x="590.3" y="123.6" width="13.5" height="21.2" fill="#fcdc8c" stroke="#4c4636" stroke-width="0.95"/><path d="M591.1999999999999 143.79999999999998 V124.5 H602.8" stroke="#fff0c0" stroke-width="0.6" fill="none"/><path d="M591.8 130.6 H594.8 V127.0 H596.5999999999999 V130.6 H601.8" stroke="#2a2410" stroke-width="0.8" fill="none"/><path d="M591.8 135.6 H593.9 V132.2 H600.0999999999999 V135.6 H601.8" stroke="#2a2410" stroke-width="0.8" fill="none"/><rect x="643.8" y="119.5" width="13.5" height="21.2" fill="#fcdc8c" stroke="#4c4636" stroke-width="0.95"/><path d="M644.6999999999999 139.7 V120.4 H656.3" stroke="#fff0c0" stroke-width="0.6" fill="none"/><text x="650.55" y="132.29999999999998" font-family="Liberation Serif" font-size="6.8" font-weight="bold" text-anchor="middle" fill="#2a2410" textLength="7.6" lengthAdjust="spacingAndGlyphs">RS</text><rect x="702" y="123.7" width="13.5" height="21.2" fill="#fcdc8c" stroke="#4c4636" stroke-width="0.95"/><path d="M702.9 143.9 V124.60000000000001 H714.5" stroke="#fff0c0" stroke-width="0.6" fill="none"/><path d="M706.4 128.7 L711.6 132.3 L706.4 135.5 M705.6 136.0 H713.8" stroke="#2a2410" stroke-width="0.85" fill="none"/><path d="M714.4 129.2 V136.0" stroke="#111" stroke-width="1.2"/><rect x="479.3" y="163.5" width="13.5" height="21.2" fill="#fcdc8c" stroke="#4c4636" stroke-width="0.95"/><path d="M480.2 183.7 V164.4 H491.8" stroke="#fff0c0" stroke-width="0.6" fill="none"/><path d="M483.90000000000003 173.0 H488.7 M483.90000000000003 175.5 H488.7" stroke="#2a2410" stroke-width="0.9"/><path d="M490.5 172.5 L491.5 171.5 V177.7" stroke="#111" stroke-width="1.1" fill="none"/><rect x="519.5" y="168.1" width="13.5" height="21.2" fill="#fcdc8c" stroke="#4c4636" stroke-width="0.95"/><path d="M520.4 188.29999999999998 V169.0 H532.0" stroke="#fff0c0" stroke-width="0.6" fill="none"/><path d="M521.0 176.7 H522.3 V172.5 H530.0 V176.7 H531.5" stroke="#2a2410" stroke-width="0.85" fill="none"/><path d="M522.3 178.1 V181.9 H530.0 V178.1" stroke="#2a2410" stroke-width="0.85" fill="none"/><rect x="581.5" y="190.6" width="13.5" height="21.2" fill="#fcdc8c" stroke="#4c4636" stroke-width="0.95"/><path d="M582.4 210.79999999999998 V191.5 H594.0" stroke="#fff0c0" stroke-width="0.6" fill="none"/><text x="590.5" y="205.5" font-family="Liberation Serif" font-size="8.4" text-anchor="middle" fill="#2a2410">1</text><rect x="595.2" y="197.79999999999998" width="3.2" height="2" fill="#111"/><rect x="617.5" y="208.6" width="13.5" height="21.2" fill="#fcdc8c" stroke="#4c4636" stroke-width="0.95"/><path d="M618.4 228.79999999999998 V209.5 H630.0" stroke="#fff0c0" stroke-width="0.6" fill="none"/><path d="M621.9 213.6 L627.1 217.2 L621.9 220.4 M621.1 220.9 H629.3" stroke="#2a2410" stroke-width="0.85" fill="none"/><path d="M629.9 214.1 V220.9" stroke="#111" stroke-width="1.2"/><rect x="675.1" y="195.1" width="13.5" height="21.2" fill="#fcdc8c" stroke="#4c4636" stroke-width="0.95"/><path d="M676.0 215.29999999999998 V196.0 H687.6" stroke="#fff0c0" stroke-width="0.6" fill="none"/><text x="681.85" y="207.89999999999998" font-family="Liberation Serif" font-size="6.8" font-weight="bold" text-anchor="middle" fill="#2a2410" textLength="7.6" lengthAdjust="spacingAndGlyphs">RS</text><rect x="443.75" y="235" width="13.5" height="21.2" fill="#fcdc8c" stroke="#4c4636" stroke-width="0.95"/><path d="M444.65 255.2 V235.9 H456.25" stroke="#fff0c0" stroke-width="0.6" fill="none"/><text x="450.8" y="248.6" font-family="Liberation Serif" font-size="8" text-anchor="middle" fill="#2a2410">&amp;</text><rect x="390.2" y="346.5" width="13.5" height="21.2" fill="#fcdc8c" stroke="#4c4636" stroke-width="0.95"/><path d="M391.09999999999997 366.7 V347.4 H402.7" stroke="#fff0c0" stroke-width="0.6" fill="none"/><text x="396.95" y="358.40000000000003" font-family="Liberation Mono" font-size="6.2" font-weight="bold" text-anchor="middle" fill="#2a2410">I</text><rect x="474.6" y="306.3" width="13.5" height="21.2" fill="#fcdc8c" stroke="#4c4636" stroke-width="0.95"/><path d="M475.5 326.5 V307.2 H487.1" stroke="#fff0c0" stroke-width="0.6" fill="none"/><path d="M477.8 309.90000000000003 H485.1 M477.8 309.90000000000003 V314.5 M476.8 311.90000000000003 L477.8 310.3 L478.8 311.90000000000003" stroke="#2a2410" stroke-width="0.8" fill="none"/><path d="M476.20000000000005 317.7 H479.20000000000005 M477.70000000000005 316.2 V319.2 M479.8 319.5 L482.20000000000005 314.5 M483.0 317.5 H485.40000000000003" stroke="#2a2410" stroke-width="0.8" fill="none"/><rect x="434.6" y="350.5" width="13.5" height="21.2" fill="#fcdc8c" stroke="#4c4636" stroke-width="0.95"/><path d="M435.5 370.7 V351.4 H447.1" stroke="#fff0c0" stroke-width="0.6" fill="none"/><path d="M436.1 359.1 H437.40000000000003 V354.9 H445.1 V359.1 H446.6" stroke="#2a2410" stroke-width="0.85" fill="none"/><path d="M437.40000000000003 360.5 V364.3 H445.1 V360.5" stroke="#2a2410" stroke-width="0.85" fill="none"/><rect x="523.9" y="337.6" width="13.5" height="21.2" fill="#fcdc8c" stroke="#4c4636" stroke-width="0.95"/><path d="M524.8 357.8 V338.5 H536.4" stroke="#fff0c0" stroke-width="0.6" fill="none"/><path d="M528.3 342.6 L533.5 346.20000000000005 L528.3 349.40000000000003 M527.5 349.90000000000003 H535.6999999999999" stroke="#2a2410" stroke-width="0.85" fill="none"/><path d="M536.3 343.1 V349.90000000000003" stroke="#111" stroke-width="1.2"/><rect x="577.1" y="364.3" width="13.5" height="21.2" fill="#fcdc8c" stroke="#4c4636" stroke-width="0.95"/><path d="M578.0 384.5 V365.2 H589.6" stroke="#fff0c0" stroke-width="0.6" fill="none"/><path d="M578.6 371.3 H581.6 V367.7 H583.4 V371.3 H588.6" stroke="#2a2410" stroke-width="0.8" fill="none"/><path d="M578.6 376.3 H580.7 V372.90000000000003 H586.9 V376.3 H588.6" stroke="#2a2410" stroke-width="0.8" fill="none"/><rect x="630.4" y="359.4" width="13.5" height="21.2" fill="#fcdc8c" stroke="#4c4636" stroke-width="0.95"/><path d="M631.3 379.59999999999997 V360.29999999999995 H642.9" stroke="#fff0c0" stroke-width="0.6" fill="none"/><text x="637.15" y="372.2" font-family="Liberation Serif" font-size="6.8" font-weight="bold" text-anchor="middle" fill="#2a2410" textLength="7.6" lengthAdjust="spacingAndGlyphs">RS</text><rect x="688.3" y="364.3" width="13.5" height="21.2" fill="#fcdc8c" stroke="#4c4636" stroke-width="0.95"/><path d="M689.1999999999999 384.5 V365.2 H700.8" stroke="#fff0c0" stroke-width="0.6" fill="none"/><path d="M692.6999999999999 369.3 L697.9 372.90000000000003 L692.6999999999999 376.1 M691.9 376.6 H700.0999999999999" stroke="#2a2410" stroke-width="0.85" fill="none"/><path d="M700.6999999999999 369.8 V376.6" stroke="#111" stroke-width="1.2"/><text x="176.8" y="108.7" font-family="Liberation Sans" font-size="8.8" fill="#262626" stroke="#262626" stroke-width="0.15" textLength="54" lengthAdjust="spacingAndGlyphs">CHANNEL</text><text x="176.8" y="117.4" font-family="Liberation Sans" font-size="8.8" fill="#262626" stroke="#262626" stroke-width="0.15" textLength="28" lengthAdjust="spacingAndGlyphs">ONE:</text><text x="172" y="358" font-family="Liberation Sans" font-size="8.8" fill="#262626" stroke="#262626" stroke-width="0.15" textLength="54.7" lengthAdjust="spacingAndGlyphs">CHANNEL</text><text x="172" y="366.8" font-family="Liberation Sans" font-size="8.8" fill="#262626" stroke="#262626" stroke-width="0.15" textLength="31" lengthAdjust="spacingAndGlyphs">TWO:</text><text x="203.2" y="157.0" font-family="Liberation Mono" font-size="6.5" fill="#1a1a1a" stroke="#1a1a1a" stroke-width="0.2" textLength="38.8" lengthAdjust="spacingAndGlyphs">PUSH BUTTON1</text><text x="203.2" y="165.8" font-family="Liberation Mono" font-size="6.5" fill="#1a1a1a" stroke="#1a1a1a" stroke-width="0.2" textLength="12" lengthAdjust="spacingAndGlyphs">IOO1</text><text x="314.1" y="170.1" font-family="Liberation Mono" font-size="6.5" fill="#1a1a1a" stroke="#1a1a1a" stroke-width="0.2" textLength="45.8" lengthAdjust="spacingAndGlyphs">B5OOO1[M5OOO1]</text><text x="367.8" y="162.0" font-family="Liberation Mono" font-size="6.5" fill="#1a1a1a" stroke="#1a1a1a" stroke-width="0.2" textLength="22.2" lengthAdjust="spacingAndGlyphs">BUZZER1</text><text x="367.8" y="171.2" font-family="Liberation Mono" font-size="6.5" fill="#1a1a1a" stroke="#1a1a1a" stroke-width="0.2" textLength="12.6" lengthAdjust="spacingAndGlyphs">QOO1</text><text x="403.4" y="103.8" font-family="Liberation Mono" font-size="6.5" fill="#1a1a1a" stroke="#1a1a1a" stroke-width="0.2" textLength="13" lengthAdjust="spacingAndGlyphs">IOO2</text><text x="488.1" y="63.7" font-family="Liberation Mono" font-size="6.5" fill="#1a1a1a" stroke="#1a1a1a" stroke-width="0.2" textLength="45.8" lengthAdjust="spacingAndGlyphs">B5OO62[M5OO62]</text><text x="448.2" y="107.7" font-family="Liberation Mono" font-size="6.5" fill="#1a1a1a" stroke="#1a1a1a" stroke-width="0.2" textLength="45.5" lengthAdjust="spacingAndGlyphs">B5OO22[M5OO22]</text><text x="537" y="94.9" font-family="Liberation Mono" font-size="6.5" fill="#1a1a1a" stroke="#1a1a1a" stroke-width="0.2" textLength="45.8" lengthAdjust="spacingAndGlyphs">B5OO37[M5OO37]</text><text x="590.3" y="121.6" font-family="Liberation Mono" font-size="6.5" fill="#1a1a1a" stroke="#1a1a1a" stroke-width="0.2" textLength="45.8" lengthAdjust="spacingAndGlyphs">B5OO41[M5OO41]</text><text x="643.8" y="116.7" font-family="Liberation Mono" font-size="6.5" fill="#1a1a1a" stroke="#1a1a1a" stroke-width="0.2" textLength="45.9" lengthAdjust="spacingAndGlyphs">B5OO23[M5OO23]</text><text x="702" y="121.4" font-family="Liberation Mono" font-size="6.5" fill="#1a1a1a" stroke="#1a1a1a" stroke-width="0.2" textLength="45.9" lengthAdjust="spacingAndGlyphs">B5OO36[M5OO36]</text><text x="479.3" y="160.9" font-family="Liberation Mono" font-size="6.5" fill="#1a1a1a" stroke="#1a1a1a" stroke-width="0.2" textLength="46" lengthAdjust="spacingAndGlyphs">B5OO4O[M5OO4O]</text><text x="519.5" y="165.9" font-family="Liberation Mono" font-size="6.5" fill="#1a1a1a" stroke="#1a1a1a" stroke-width="0.2" textLength="45.8" lengthAdjust="spacingAndGlyphs">B5OO34[M5OO34]</text><text x="581.2" y="188.0" font-family="Liberation Mono" font-size="6.5" fill="#1a1a1a" stroke="#1a1a1a" stroke-width="0.2" textLength="45.5" lengthAdjust="spacingAndGlyphs">B5OO35[M5OO35]</text><text x="617.7" y="206.0" font-family="Liberation Mono" font-size="6.5" fill="#1a1a1a" stroke="#1a1a1a" stroke-width="0.2" textLength="45.7" lengthAdjust="spacingAndGlyphs">B5OO38[M5OO38]</text><text x="675.1" y="192.5" font-family="Liberation Mono" font-size="6.5" fill="#1a1a1a" stroke="#1a1a1a" stroke-width="0.2" textLength="45.5" lengthAdjust="spacingAndGlyphs">B5OO33[M5OO33]</text><text x="443.75" y="232.0" font-family="Liberation Mono" font-size="6.5" fill="#1a1a1a" stroke="#1a1a1a" stroke-width="0.2" textLength="45.75" lengthAdjust="spacingAndGlyphs">B5OO39[M5OO39]</text><text x="390.2" y="344.0" font-family="Liberation Mono" font-size="6.5" fill="#1a1a1a" stroke="#1a1a1a" stroke-width="0.2" textLength="13.2" lengthAdjust="spacingAndGlyphs">IOO4</text><text x="474.4" y="303.3" font-family="Liberation Mono" font-size="6.5" fill="#1a1a1a" stroke="#1a1a1a" stroke-width="0.2" textLength="46.8" lengthAdjust="spacingAndGlyphs">B5OO64[M5OO64]</text><text x="434.4" y="348.3" font-family="Liberation Mono" font-size="6.5" fill="#1a1a1a" stroke="#1a1a1a" stroke-width="0.2" textLength="45.5" lengthAdjust="spacingAndGlyphs">B5OO52[M5OO52]</text><text x="523.75" y="334.5" font-family="Liberation Mono" font-size="6.5" fill="#1a1a1a" stroke="#1a1a1a" stroke-width="0.2" textLength="46.25" lengthAdjust="spacingAndGlyphs">B5OO58[M5OO58]</text><text x="577" y="361.5" font-family="Liberation Mono" font-size="6.5" fill="#1a1a1a" stroke="#1a1a1a" stroke-width="0.2" textLength="46" lengthAdjust="spacingAndGlyphs">B5OO63[M5OO63]</text><text x="630.5" y="356.5" font-family="Liberation Mono" font-size="6.5" fill="#1a1a1a" stroke="#1a1a1a" stroke-width="0.2" textLength="45.75" lengthAdjust="spacingAndGlyphs">B5OO53[M5OO53]</text><text x="688.2" y="361.6" font-family="Liberation Mono" font-size="6.5" fill="#1a1a1a" stroke="#1a1a1a" stroke-width="0.2" textLength="46" lengthAdjust="spacingAndGlyphs">B5OO57[M5OO57]</text><text x="280.9" y="193.10000000000002" font-family="Liberation Mono" font-size="6.6" fill="#4a9696" textLength="31.7" lengthAdjust="spacingAndGlyphs">REG5OOOO -</text><text x="280.9" y="201.10000000000002" font-family="Liberation Mono" font-size="6.6" fill="#4a9696" textLength="29.6" lengthAdjust="spacingAndGlyphs">Rem = Off</text><text x="280.9" y="208.60000000000002" font-family="Liberation Mono" font-size="6.6" fill="#4a9696" textLength="22.5" lengthAdjust="spacingAndGlyphs">O5:OOs+</text><text x="280.9" y="217.0" font-family="Liberation Mono" font-size="6.6" fill="#4a9696" textLength="22.5" lengthAdjust="spacingAndGlyphs">O5:OOs+</text><text x="451" y="86.1" font-family="Liberation Mono" font-size="6.6" fill="#4a9696" textLength="36" lengthAdjust="spacingAndGlyphs">REG5OO61 -</text><text x="451" y="94.39999999999999" font-family="Liberation Mono" font-size="6.6" fill="#4a9696" textLength="32.6" lengthAdjust="spacingAndGlyphs">Rem = Off+</text><text x="451" y="103.1" font-family="Liberation Mono" font-size="6.6" fill="#4a9696" textLength="16" lengthAdjust="spacingAndGlyphs">Qu=O+</text><text x="451" y="111.3" font-family="Liberation Mono" font-size="6.6" fill="#4a9696" textLength="14" lengthAdjust="spacingAndGlyphs">Qu=O</text><text x="451" y="119.3" font-family="Liberation Mono" font-size="6.6" fill="#4a9696" textLength="22.6" lengthAdjust="spacingAndGlyphs">Start=O</text><text x="414.6" y="130.20000000000002" font-family="Liberation Mono" font-size="6.6" fill="#4a9696" textLength="32.4" lengthAdjust="spacingAndGlyphs">REG5OO21 -</text><text x="414.6" y="138.60000000000002" font-family="Liberation Mono" font-size="6.6" fill="#4a9696" textLength="29.4" lengthAdjust="spacingAndGlyphs">Rem = Off</text><text x="414.6" y="146.9" font-family="Liberation Mono" font-size="6.6" fill="#4a9696" textLength="22" lengthAdjust="spacingAndGlyphs">OO:O1s-</text><text x="556.9" y="143.20000000000002" font-family="Liberation Mono" font-size="6.6" fill="#4a9696" textLength="31.7" lengthAdjust="spacingAndGlyphs">REG5OO4O -</text><text x="556.9" y="151.5" font-family="Liberation Mono" font-size="6.6" fill="#4a9696" textLength="29.4" lengthAdjust="spacingAndGlyphs">Rem = Off</text><text x="556.9" y="159.8" font-family="Liberation Mono" font-size="6.6" fill="#4a9696" textLength="22" lengthAdjust="spacingAndGlyphs">OO:O1s+</text><text x="486" y="188.10000000000002" font-family="Liberation Mono" font-size="6.6" fill="#4a9696" textLength="31.8" lengthAdjust="spacingAndGlyphs">REG5OO33 -</text><text x="486" y="197.0" font-family="Liberation Mono" font-size="6.6" fill="#4a9696" textLength="29.4" lengthAdjust="spacingAndGlyphs">Rem = Off</text><text x="486" y="204.5" font-family="Liberation Mono" font-size="6.6" fill="#4a9696" textLength="22" lengthAdjust="spacingAndGlyphs">OO:O5s-</text><text x="617.1" y="139.0" font-family="Liberation Mono" font-size="6.6" fill="#4a9696" textLength="25.7" lengthAdjust="spacingAndGlyphs">Rem=off-</text><text x="647.7" y="214.8" font-family="Liberation Mono" font-size="6.6" fill="#4a9696" textLength="26.3" lengthAdjust="spacingAndGlyphs">Rem=off-</text><text x="437.7" y="326.2" font-family="Liberation Mono" font-size="6.6" fill="#4a9696" textLength="26.8" lengthAdjust="spacingAndGlyphs">REG5OO63</text><text x="437.7" y="335.0" font-family="Liberation Mono" font-size="6.6" fill="#4a9696" textLength="32.3" lengthAdjust="spacingAndGlyphs">Rem = Off+</text><text x="437.7" y="342.7" font-family="Liberation Mono" font-size="6.6" fill="#4a9696" textLength="19.3" lengthAdjust="spacingAndGlyphs">Qu=O+</text><text x="437.7" y="350.8" font-family="Liberation Mono" font-size="6.6" fill="#4a9696" textLength="14" lengthAdjust="spacingAndGlyphs">Qu=O</text><text x="437.7" y="358.6" font-family="Liberation Mono" font-size="6.6" fill="#4a9696" textLength="22.8" lengthAdjust="spacingAndGlyphs">Start=O</text><text x="401.2" y="371.2" font-family="Liberation Mono" font-size="6.6" fill="#4a9696" textLength="32.5" lengthAdjust="spacingAndGlyphs">REG5OO51 -</text><text x="401.2" y="378.90000000000003" font-family="Liberation Mono" font-size="6.6" fill="#4a9696" textLength="28.8" lengthAdjust="spacingAndGlyphs">Rem = Off</text><text x="401.2" y="387.7" font-family="Liberation Mono" font-size="6.6" fill="#4a9696" textLength="22.6" lengthAdjust="spacingAndGlyphs">OO:O1s-</text><text x="543.75" y="383.8" font-family="Liberation Mono" font-size="6.6" fill="#4a9696" textLength="31.25" lengthAdjust="spacingAndGlyphs">REG5OO62 -</text><text x="543.75" y="391.3" font-family="Liberation Mono" font-size="6.6" fill="#4a9696" textLength="28.75" lengthAdjust="spacingAndGlyphs">Rem = Off</text><text x="603.75" y="379.3" font-family="Liberation Mono" font-size="6.6" fill="#4a9696" textLength="26.25" lengthAdjust="spacingAndGlyphs">Rem=off-</text></svg><div class="a" style="left:789px;top:53px;width:11px;height:341px;background:#f0f0f0;"></div><div class="a" style="left:790px;top:70px;width:8.5px;height:42.5px;background:linear-gradient(90deg,#f4f4f4,#dadada);border:1px solid #b4b4b4;border-radius:1.5px;"></div><svg class="a" style="left:789px;top:53px" width="11" height="341"><path d="M3 7 L5.5 4.5 L8 7 Z" fill="#444"/><path d="M3 334.5 L5.5 337 L8 334.5 Z" fill="#444"/><path d="M3.5 36.5 H7.5 M3.5 38.5 H7.5 M3.5 40.5 H7.5" stroke="#888" stroke-width="0.6"/></svg><div class="a" style="left:131px;top:394px;width:658px;height:10px;background:#f0f0f0;"></div><div class="a" style="left:142.5px;top:394.5px;width:218.5px;height:8.5px;background:linear-gradient(#f4f4f4,#d8d8d8);border:1px solid #b4b4b4;border-radius:1.5px;"></div><svg class="a" style="left:131px;top:394px" width="658" height="10"><path d="M7 2.5 L4.5 5 L7 7.5 Z" fill="#444"/><path d="M652 2.5 L654.5 5 L652 7.5 Z" fill="#444"/><path d="M118.5 3 V7 M120.5 3 V7 M122.5 3 V7" stroke="#888" stroke-width="0.6"/></svg><div class="a" style="left:131px;top:403.5px;width:669px;height:1px;background:#e0e0e0;"></div><div class="a" style="left:789px;top:394px;width:11px;height:10px;background:#f0f0f0;"></div><div class="a" style="left:0px;top:405px;width:800px;height:62px;background:#f0f0f0;"></div><div class="a" style="left:0px;top:406.5px;width:800px;height:1px;background:#a8a8a8;"></div><div class="a" style="left:0px;top:407.5px;width:800px;height:1px;background:#fbfbfb;"></div><svg class="a" style="left:0;top:408px" width="10" height="60"><path d="M2 3 L5 6 M5 3 L2 6" stroke="#111" stroke-width="1"/><path d="M2.5 12.5 L4 11.5 V13.5 Z" fill="#222"/><path d="M3 20 V55 M5.5 20 V55" stroke="#c4c4c4" stroke-width="0.8"/></svg><div class="a" style="left:11px;top:409px;width:31px;height:16px;background:#f7f7f7;"></div><div class="a" style="left:42.3px;top:411px;width:1px;height:13px;background:#6a6a6a;"></div><div class="a" style="left:87.4px;top:411px;width:1px;height:13px;background:#6a6a6a;"></div><div class="a" style="left:146.3px;top:411px;width:1px;height:13px;background:#6a6a6a;"></div><div class="a" style="left:201.3px;top:411px;width:1px;height:13px;background:#6a6a6a;"></div><svg class="a" style="left:0;top:0" width="220" height="430"><path d="M15 412.5 H19.5 L21.5 414.5 V420.8 H15 Z" fill="#e8e8e0" stroke="#404040" stroke-width="0.8"/><path d="M16.3 415.5 H20 M16.3 417 H20 M16.3 418.5 H20" stroke="#777" stroke-width="0.5"/><rect x="45.3" y="413.5" width="8.5" height="8" fill="#3a4a18" stroke="#222" stroke-width="0.6"/><path d="M46.5 416 L49 414.5 L52.5 417.5" stroke="#9fd8a0" stroke-width="1"/><rect x="46" y="419.5" width="7" height="1.3" fill="#b8c040"/><rect x="91" y="413" width="5" height="4.5" fill="#e8f0ff" stroke="#3a5aa0" stroke-width="0.7"/><rect x="94.5" y="416.5" width="5" height="4.5" fill="#d8d070" stroke="#6a6020" stroke-width="0.7"/><rect x="150.5" y="414" width="7.5" height="6.5" fill="#fff" stroke="#555" stroke-width="0.7"/><path d="M152 417.5 H156.5" stroke="#4050c0" stroke-width="0.9"/></svg><div class="a" style="left:10.5px;top:425.5px;width:787px;height:39.5px;background:#fff;border-top:1.3px solid #7a7a7a;border-left:1.3px solid #7a7a7a;border-right:1px solid #b0b0b0;border-bottom:1.4px solid #6a6a6a;"></div><div class="a" style="left:9px;top:465.8px;width:791px;height:1px;background:#dcdcdc;"></div><div class="a" style="left:0px;top:467px;width:800px;height:11px;background:#f0f0f0;"></div><div class="a" style="left:0px;top:467.5px;width:800px;height:0.8px;background:#d4d4d4;"></div><div class="a" style="left:453.5px;top:468.5px;width:114px;height:10px;background:#fff;border:1px solid #c8c8c8;border-bottom:none;"></div><div class="a" style="left:567.5px;top:468.5px;width:160px;height:10px;border-left:1px solid #d0d0d0;"></div><svg class="a" style="left:728px;top:468px" width="14" height="10"><ellipse cx="6.2" cy="5.3" rx="4.8" ry="3.6" fill="#1aa01a" stroke="#225522" stroke-width="0.9"/></svg><div class="a" style="left:741.5px;top:468.5px;width:17px;height:10px;border-left:1px solid #d0d0d0;border-right:1px solid #d0d0d0;"></div><div class="a" style="left:759.5px;top:468.5px;width:20.5px;height:10px;border-right:1px solid #d0d0d0;"></div><svg class="a" style="left:780px;top:30px" width="20" height="40"><circle cx="31" cy="21" r="16" fill="#e42a2a"/></svg><svg class="a" style="left:0;top:0" width="800" height="478"><defs><clipPath id="treeclip"><rect x="17" y="53" width="99.3" height="342"/></clipPath></defs><text x="11" y="8.7" font-family='"Liberation Sans",sans-serif' font-size="7.8" fill="#1a2636" font-weight="normal" text-anchor="start" stroke="#1a2636" stroke-width="0.18" textLength="114" lengthAdjust="spacingAndGlyphs">xLogic Soft - FORD PROJECT111.xlg</text><text x="4" y="20.3" font-family='"Liberation Sans",sans-serif' font-size="7.3" fill="#1e1e1e" font-weight="normal" text-anchor="start" stroke="#1e1e1e" stroke-width="0.18" textLength="9.7" lengthAdjust="spacingAndGlyphs">File</text><text x="22" y="20.3" font-family='"Liberation Sans",sans-serif' font-size="7.3" fill="#1e1e1e" font-weight="normal" text-anchor="start" stroke="#1e1e1e" stroke-width="0.18" textLength="11.9" lengthAdjust="spacingAndGlyphs">Edit</text><text x="42" y="20.3" font-family='"Liberation Sans",sans-serif' font-size="7.3" fill="#1e1e1e" font-weight="normal" text-anchor="start" stroke="#1e1e1e" stroke-width="0.18" textLength="17.2" lengthAdjust="spacingAndGlyphs">Tools</text><text x="67.4" y="20.3" font-family='"Liberation Sans",sans-serif' font-size="7.3" fill="#1e1e1e" font-weight="normal" text-anchor="start" stroke="#1e1e1e" stroke-width="0.18" textLength="14" lengthAdjust="spacingAndGlyphs">SMS</text><text x="89.3" y="20.3" font-family='"Liberation Sans",sans-serif' font-size="7.3" fill="#1e1e1e" font-weight="normal" text-anchor="start" stroke="#1e1e1e" stroke-width="0.18" textLength="15.7" lengthAdjust="spacingAndGlyphs">View</text><text x="112" y="20.3" font-family='"Liberation Sans",sans-serif' font-size="7.3" fill="#1e1e1e" font-weight="normal" text-anchor="start" stroke="#1e1e1e" stroke-width="0.18" textLength="15" lengthAdjust="spacingAndGlyphs">Help</text><text x="719.5" y="34.5" font-family='"Liberation Serif",serif' font-size="8" fill="#222" font-weight="normal" text-anchor="start" textLength="23" lengthAdjust="spacingAndGlyphs">English</text><text x="2" y="48.4" font-family='"Liberation Sans",sans-serif' font-size="7" fill="#5f6f80" font-weight="normal" text-anchor="start" stroke="#5f6f80" stroke-width="0.18" textLength="36.2" lengthAdjust="spacingAndGlyphs">Workspace</text><text x="39" y="61.1" font-family="Liberation Sans" font-size="7.5" fill="#0a0a0a" stroke="#0a0a0a" stroke-width="0.15" font-weight="bold" textLength="59.20" lengthAdjust="spacingAndGlyphs" clip-path="url(#treeclip)">Special functions</text><text x="49.7" y="72.22" font-family="Liberation Sans" font-size="7.5" fill="#0a0a0a" stroke="#0a0a0a" stroke-width="0.15" font-weight="bold" textLength="19.34" lengthAdjust="spacingAndGlyphs" clip-path="url(#treeclip)">Timer</text><text x="60" y="83.34" font-family="Liberation Sans" font-size="7.5" fill="#2a2a2a" stroke="#2a2a2a" stroke-width="0.15" font-weight="normal" textLength="30.20" lengthAdjust="spacingAndGlyphs" clip-path="url(#treeclip)">On-Delay</text><text x="60" y="94.46000000000001" font-family="Liberation Sans" font-size="7.5" fill="#2a2a2a" stroke="#2a2a2a" stroke-width="0.15" font-weight="normal" textLength="30.07" lengthAdjust="spacingAndGlyphs" clip-path="url(#treeclip)">Off-Delay</text><text x="60" y="105.58" font-family="Liberation Sans" font-size="7.5" fill="#2a2a2a" stroke="#2a2a2a" stroke-width="0.15" font-weight="normal" textLength="43.97" lengthAdjust="spacingAndGlyphs" clip-path="url(#treeclip)">On-/Off-Delay</text><text x="60" y="116.69999999999999" font-family="Liberation Sans" font-size="7.5" fill="#2a2a2a" stroke="#2a2a2a" stroke-width="0.15" font-weight="normal" textLength="60.81" lengthAdjust="spacingAndGlyphs" clip-path="url(#treeclip)">Retentive on-Delay</text><text x="60" y="127.82" font-family="Liberation Sans" font-size="7.5" fill="#2a2a2a" stroke="#2a2a2a" stroke-width="0.15" font-weight="normal" textLength="85.05" lengthAdjust="spacingAndGlyphs" clip-path="url(#treeclip)">Wiping relay (pulse output)</text><text x="60" y="138.94" font-family="Liberation Sans" font-size="7.5" fill="#2a2a2a" stroke="#2a2a2a" stroke-width="0.15" font-weight="normal" textLength="86.65" lengthAdjust="spacingAndGlyphs" clip-path="url(#treeclip)">Edge triggered wiping relay</text><text x="60" y="150.06" font-family="Liberation Sans" font-size="7.5" fill="#2a2a2a" stroke="#2a2a2a" stroke-width="0.15" font-weight="normal" textLength="99.36" lengthAdjust="spacingAndGlyphs" clip-path="url(#treeclip)">Asynchronous Pulse Generator</text><text x="60" y="161.18" font-family="Liberation Sans" font-size="7.5" fill="#2a2a2a" stroke="#2a2a2a" stroke-width="0.15" font-weight="normal" textLength="61.20" lengthAdjust="spacingAndGlyphs" clip-path="url(#treeclip)">Random Generator</text><text x="60" y="172.29999999999998" font-family="Liberation Sans" font-size="7.5" fill="#2a2a2a" stroke="#2a2a2a" stroke-width="0.15" font-weight="normal" textLength="73.91" lengthAdjust="spacingAndGlyphs" clip-path="url(#treeclip)">Stairway lighting switch</text><text x="60" y="183.42" font-family="Liberation Sans" font-size="7.5" fill="#2a2a2a" stroke="#2a2a2a" stroke-width="0.15" font-weight="normal" textLength="73.52" lengthAdjust="spacingAndGlyphs" clip-path="url(#treeclip)">Multiple function switch</text><text x="60" y="194.54" font-family="Liberation Sans" font-size="7.5" fill="#2a2a2a" stroke="#2a2a2a" stroke-width="0.15" font-weight="normal" textLength="43.17" lengthAdjust="spacingAndGlyphs" clip-path="url(#treeclip)">Weekly Timer</text><text x="60" y="205.66" font-family="Liberation Sans" font-size="7.5" fill="#2a2a2a" stroke="#2a2a2a" stroke-width="0.15" font-weight="normal" textLength="39.47" lengthAdjust="spacingAndGlyphs" clip-path="url(#treeclip)">Yearly Timer</text><text x="60" y="216.77999999999997" font-family="Liberation Sans" font-size="7.5" fill="#2a2a2a" stroke="#2a2a2a" stroke-width="0.15" font-weight="normal" textLength="59.60" lengthAdjust="spacingAndGlyphs" clip-path="url(#treeclip)">Astronomical clock</text><text x="60" y="227.89999999999998" font-family="Liberation Sans" font-size="7.5" fill="#2a2a2a" stroke="#2a2a2a" stroke-width="0.15" font-weight="normal" textLength="33.39" lengthAdjust="spacingAndGlyphs" clip-path="url(#treeclip)">Stopwatch</text><text x="49.7" y="239.01999999999998" font-family="Liberation Sans" font-size="7.5" fill="#0a0a0a" stroke="#0a0a0a" stroke-width="0.15" font-weight="bold" textLength="27.41" lengthAdjust="spacingAndGlyphs" clip-path="url(#treeclip)">Counter</text><text x="60" y="250.14" font-family="Liberation Sans" font-size="7.5" fill="#2a2a2a" stroke="#2a2a2a" stroke-width="0.15" font-weight="normal" textLength="55.24" lengthAdjust="spacingAndGlyphs" clip-path="url(#treeclip)">Up/Down counter</text><text x="60" y="261.26" font-family="Liberation Sans" font-size="7.5" fill="#2a2a2a" stroke="#2a2a2a" stroke-width="0.15" font-weight="normal" textLength="46.50" lengthAdjust="spacingAndGlyphs" clip-path="url(#treeclip)">Hours Counter</text><text x="60" y="272.38" font-family="Liberation Sans" font-size="7.5" fill="#2a2a2a" stroke="#2a2a2a" stroke-width="0.15" font-weight="normal" textLength="54.05" lengthAdjust="spacingAndGlyphs" clip-path="url(#treeclip)">Threshold trigger</text><text x="49.7" y="283.5" font-family="Liberation Sans" font-size="7.5" fill="#0a0a0a" stroke="#0a0a0a" stroke-width="0.15" font-weight="bold" textLength="24.23" lengthAdjust="spacingAndGlyphs" clip-path="url(#treeclip)">Analog</text><text x="60" y="294.62" font-family="Liberation Sans" font-size="7.5" fill="#2a2a2a" stroke="#2a2a2a" stroke-width="0.15" font-weight="normal" textLength="60.41" lengthAdjust="spacingAndGlyphs" clip-path="url(#treeclip)">Analog comparator</text><text x="60" y="305.74" font-family="Liberation Sans" font-size="7.5" fill="#2a2a2a" stroke="#2a2a2a" stroke-width="0.15" font-weight="normal" textLength="75.92" lengthAdjust="spacingAndGlyphs" clip-path="url(#treeclip)">Analog threshold trigger</text><text x="60" y="316.86" font-family="Liberation Sans" font-size="7.5" fill="#2a2a2a" stroke="#2a2a2a" stroke-width="0.15" font-weight="normal" textLength="51.67" lengthAdjust="spacingAndGlyphs" clip-path="url(#treeclip)">Analog Amplifier</text><text x="60" y="327.98" font-family="Liberation Sans" font-size="7.5" fill="#2a2a2a" stroke="#2a2a2a" stroke-width="0.15" font-weight="normal" textLength="54.86" lengthAdjust="spacingAndGlyphs" clip-path="url(#treeclip)">Analog watchdog</text><text x="60" y="339.1" font-family="Liberation Sans" font-size="7.5" fill="#2a2a2a" stroke="#2a2a2a" stroke-width="0.15" font-weight="normal" textLength="79.36" lengthAdjust="spacingAndGlyphs" clip-path="url(#treeclip)">Analog differential trigger</text><text x="60" y="350.22" font-family="Liberation Sans" font-size="7.5" fill="#2a2a2a" stroke="#2a2a2a" stroke-width="0.15" font-weight="normal" textLength="40.14" lengthAdjust="spacingAndGlyphs" clip-path="url(#treeclip)">Analog MUX</text><text x="60" y="361.34" font-family="Liberation Sans" font-size="7.5" fill="#2a2a2a" stroke="#2a2a2a" stroke-width="0.15" font-weight="normal" textLength="38.15" lengthAdjust="spacingAndGlyphs" clip-path="url(#treeclip)">PI controller</text><text x="60" y="372.46" font-family="Liberation Sans" font-size="7.5" fill="#2a2a2a" stroke="#2a2a2a" stroke-width="0.15" font-weight="normal" textLength="43.32" lengthAdjust="spacingAndGlyphs" clip-path="url(#treeclip)">Analog Ramp</text><text x="60" y="383.58" font-family="Liberation Sans" font-size="7.5" fill="#2a2a2a" stroke="#2a2a2a" stroke-width="0.15" font-weight="normal" textLength="40.15" lengthAdjust="spacingAndGlyphs" clip-path="url(#treeclip)">Analog Math</text><text x="60" y="394.7" font-family="Liberation Sans" font-size="7.5" fill="#2a2a2a" stroke="#2a2a2a" stroke-width="0.15" font-weight="normal" textLength="88.23" lengthAdjust="spacingAndGlyphs" clip-path="url(#treeclip)">Analog Math error detection</text><text x="146.7" y="50.3" font-family='"Liberation Sans",sans-serif' font-size="7.6" fill="#111" font-weight="bold" text-anchor="start" stroke="#111" stroke-width="0.18" textLength="75" lengthAdjust="spacingAndGlyphs">FORD PROJECT111.xlg</text><text x="25.7" y="420.8" font-family='"Liberation Sans",sans-serif' font-size="8.4" fill="#222" font-weight="normal" text-anchor="start" stroke="#222" stroke-width="0.18" textLength="12.4" lengthAdjust="spacingAndGlyphs">Info</text><text x="57.5" y="421" font-family='"Liberation Sans",sans-serif' font-size="8.4" fill="#222" font-weight="normal" text-anchor="start" stroke="#222" stroke-width="0.18" textLength="27" lengthAdjust="spacingAndGlyphs">Simulate</text><text x="103.6" y="421" font-family='"Liberation Sans",sans-serif' font-size="8.4" fill="#222" font-weight="normal" text-anchor="start" stroke="#222" stroke-width="0.18" textLength="40" lengthAdjust="spacingAndGlyphs">Simulate I/O</text><text x="162" y="421" font-family='"Liberation Sans",sans-serif' font-size="8.4" fill="#222" font-weight="normal" text-anchor="start" stroke="#222" stroke-width="0.18" textLength="35.6" lengthAdjust="spacingAndGlyphs">Analog I/O</text><text x="1" y="475.6" font-family='"Liberation Sans",sans-serif' font-size="7.2" fill="#222" font-weight="normal" text-anchor="start" stroke="#222" stroke-width="0.18" textLength="19.3" lengthAdjust="spacingAndGlyphs">Ready</text><text x="510.5" y="476.5" font-family='"Liberation Sans",sans-serif' font-size="6.8" fill="#3a8ad8" font-weight="normal" text-anchor="middle" stroke="#3a8ad8" stroke-width="0.18">0%</text><text x="569.5" y="475.3" font-family='"Liberation Sans",sans-serif' font-size="6" fill="#222" font-weight="normal" text-anchor="start" stroke="#222" stroke-width="0.1" textLength="47" lengthAdjust="spacingAndGlyphs">E LC-18DC-D-TN</text><text x="743.5" y="476.2" font-family='"Liberation Sans",sans-serif' font-size="7.2" fill="#222" font-weight="normal" text-anchor="start" stroke="#222" stroke-width="0.18" textLength="13.5" lengthAdjust="spacingAndGlyphs">CAP</text><text x="761" y="476.2" font-family='"Liberation Sans",sans-serif' font-size="7.2" fill="#222" font-weight="normal" text-anchor="start" stroke="#222" stroke-width="0.18" textLength="15.8" lengthAdjust="spacingAndGlyphs">NUM</text></svg></body></html>
